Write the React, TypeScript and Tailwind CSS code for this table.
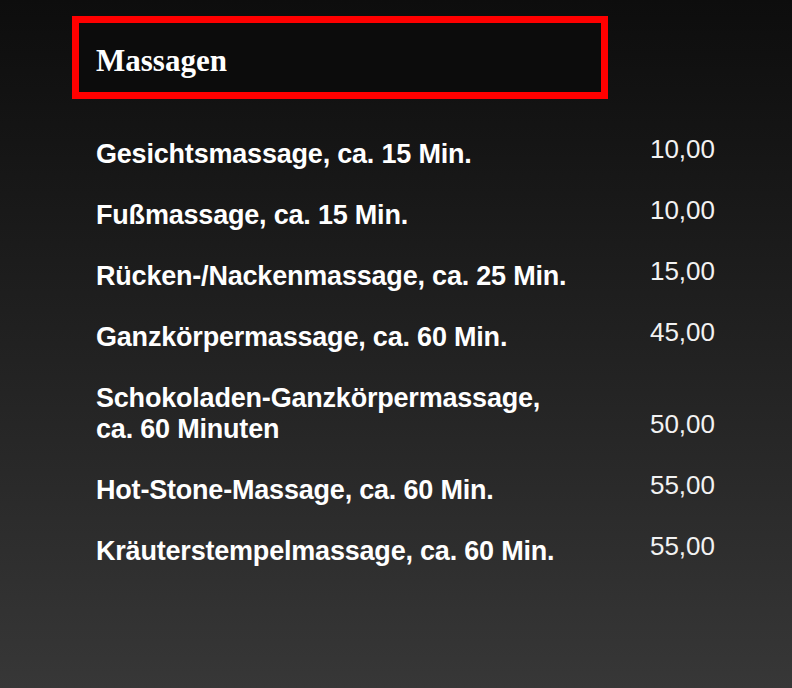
import React from 'react'

const items: { name: React.ReactNode; price: string }[] = [
  { name: 'Gesichtsmassage, ca. 15 Min.', price: '10,00' },
  { name: 'Fußmassage, ca. 15 Min.', price: '10,00' },
  { name: 'Rücken-/Nackenmassage, ca. 25 Min.', price: '15,00' },
  { name: 'Ganzkörpermassage, ca. 60 Min.', price: '45,00' },
  {
    name: (
      <>
        Schokoladen-Ganzkörpermassage,
        <br />
        ca. 60 Minuten
      </>
    ),
    price: '50,00',
  },
  { name: 'Hot-Stone-Massage, ca. 60 Min.', price: '55,00' },
  { name: 'Kräuterstempelmassage, ca. 60 Min.', price: '55,00' },
]

export default function App() {
  return (
    <div className="w-[792px] h-[688px] overflow-hidden bg-gradient-to-b from-[#0d0d0d] to-[#373737] text-white">
      <div className="pl-[72px] pt-[16px]">
        {/* Title box */}
        <div className="w-[536px] h-[83px] border-[7px] border-[#ff0000] bg-[#0c0c0c] pl-[17px] pt-[22px]">
          <h1 className="font-['Liberation_Serif',serif] font-bold text-[31px] leading-[31px]">Massagen</h1>
        </div>

        {/* Price list */}
        <div className="mt-[40px] flex flex-col gap-[30px] pl-[24px] w-[643px]">
          {items.map((item, i) => (
            <div key={i} className="flex items-end justify-between">
              <div className="font-['Liberation_Sans',Arial,sans-serif] font-bold text-[27px] leading-[31px] tracking-[-0.2px]">
                {item.name}
              </div>
              <div className="font-['Liberation_Sans',Arial,sans-serif] text-[26px] leading-[20px] mb-[11px] text-[#f2f2f2]">
                {item.price}
              </div>
            </div>
          ))}
        </div>
      </div>
    </div>
  )
}
